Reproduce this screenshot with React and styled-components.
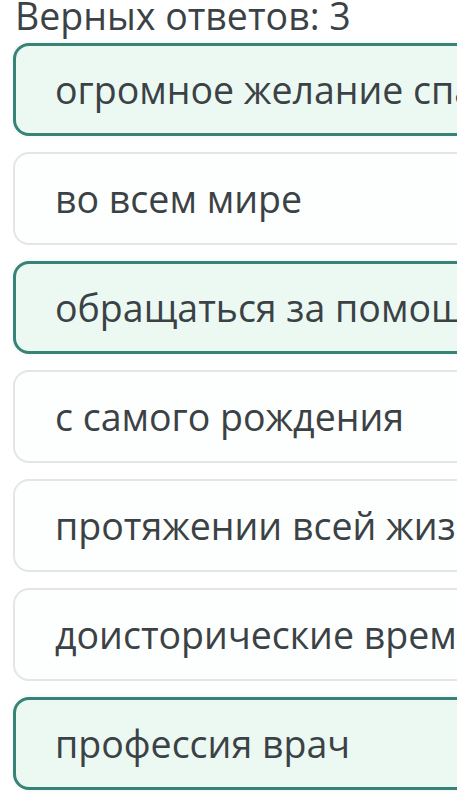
import React from "react";
import styled, { createGlobalStyle } from "styled-components";

const GlobalStyle = createGlobalStyle`
  html, body {
    margin: 0;
    padding: 0;
    background: #ffffff;
    overflow: hidden;
  }
`;

const answers = [
  { text: "огромное желание спасать людей", picked: true },
  { text: "во всем мире", picked: false },
  { text: "обращаться за помощью", picked: true },
  { text: "с самого рождения", picked: false },
  { text: "протяжении всей жизни", picked: false },
  { text: "доисторические времена", picked: false },
  { text: "профессия врач", picked: true },
];

export default function App() {
  return (
    <>
      <GlobalStyle />
      <Page>
        <Title>Верных ответов: 3</Title>
        <List>
          {answers.map((a) => (
            <Option key={a.text} $picked={a.picked}>
              {a.text}
            </Option>
          ))}
        </List>
      </Page>
    </>
  );
}

const Page = styled.div`
  width: 457px;
  height: 808px;
  overflow: hidden;
  font-family: "Open Sans", "Noto Sans", sans-serif;
  color: #3b4245;
`;

const Title = styled.div`
  margin: -3px 0 0 15px;
  font-size: 37.5px;
  line-height: 37px;
  white-space: nowrap;
`;

const List = styled.div`
  display: flex;
  flex-direction: column;
  gap: 16px;
  margin: 9px 0 0 13px;
`;

// picked answers get the teal frame and mint fill
const Option = styled.div`
  box-sizing: border-box;
  width: 560px;
  height: 93px;
  display: flex;
  align-items: center;
  padding-left: ${(p) => (p.$picked ? "39px" : "40px")};
  border-radius: 16px;
  border: ${(p) => (p.$picked ? "3px solid #388377" : "2px solid #e2e6e5")};
  background: ${(p) => (p.$picked ? "#ecf9f3" : "#fdfefe")};
  box-shadow: ${(p) => (p.$picked ? "0 0 4px rgba(58, 135, 123, 0.12)" : "none")};
  font-size: 37.5px;
  white-space: nowrap;
  overflow: hidden;
`;
